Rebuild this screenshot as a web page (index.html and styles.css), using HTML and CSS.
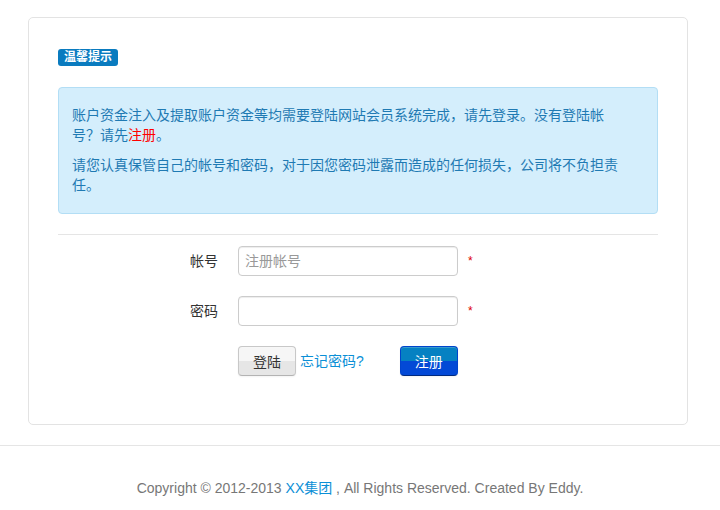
FILE: index.html
```html
<!DOCTYPE html>
<html lang="zh-CN">
<head>
    <meta charset="UTF-8">
    <meta name="viewport" content="width=device-width, initial-scale=1.0">
    <title>会员登陆</title>

    <link rel="stylesheet" href="styles.css">
</head>
<body>

    <div class="panel">
        <span class="badge">温馨提示</span>

        <div class="alert">
            <p>账户资金注入及提取账户资金等均需要登陆网站会员系统完成，请先登录。没有登陆帐号？请先<a href="#" class="red">注册</a>。</p>
            <p>请您认真保管自己的帐号和密码，对于因您密码泄露而造成的任何损失，公司将不负担责任。</p>
        </div>

        <hr class="line">

        <form class="login-form">
            <div class="row">
                <label class="row-label" for="user">帐号</label>
                <input type="text" id="user" class="field" placeholder="注册帐号">
                <span class="star">*</span>
            </div>
            <div class="row">
                <label class="row-label" for="pass">密码</label>
                <input type="password" id="pass" class="field">
                <span class="star">*</span>
            </div>
            <div class="row actions">
                <span class="row-label"></span>
                <button type="button" class="btn">登陆</button>
                <a href="#" class="forget">忘记密码?</a>
                <button type="button" class="btn btn-blue">注册</button>
            </div>
        </form>
    </div>

    <footer class="footer">
        <p>Copyright © 2012-2013 <a href="#">XX集团</a> , All Rights Reserved. Created By Eddy.</p>
    </footer>

</body>
</html>
```

FILE: styles.css
```css
* {
    margin: 0;
    padding: 0;
    box-sizing: border-box;
}

body {
    font-family: "Liberation Sans", "Noto Sans CJK SC", sans-serif;
    font-size: 14px;
    line-height: 20px;
    color: #333;
    background: #fff;
}

a {
    text-decoration: none;
}

.panel {
    width: 660px;
    margin: 17px 0 0 28px;
    padding: 31px 29px 48px;
    border: 1px solid #e3e3e3;
    border-radius: 5px;
}

.badge {
    display: block;
    width: 60px;
    height: 17px;
    line-height: 17px;
    text-align: center;
    font-size: 12px;
    font-weight: bold;
    color: #fff;
    background: #0a7bbf;
    border-radius: 3px;
}

.alert {
    margin-top: 21px;
    padding: 17px 30px 8px 13px;
    background: #d4eefc;
    border: 1px solid #b3def5;
    border-radius: 4px;
    color: #1f7ab3;
}

.alert p {
    margin-bottom: 10px;
}

.alert .red {
    color: #f00;
}

.line {
    margin: 20px 0 10px;
    border: 0;
    border-top: 1px solid #e5e5e5;
    border-bottom: 1px solid #fff;
}

.row {
    display: flex;
    align-items: center;
    height: 30px;
    margin-bottom: 20px;
}

.row:last-child {
    margin-bottom: 0;
}

.row-label {
    width: 160px;
    margin-right: 20px;
    text-align: right;
    color: #333;
}

.field {
    width: 220px;
    height: 30px;
    padding: 4px 6px;
    border: 1px solid #ccc;
    border-radius: 4px;
    font-family: inherit;
    font-size: 14px;
    color: #555;
    box-shadow: inset 0 1px 1px rgba(0, 0, 0, 0.075);
}

.field::placeholder {
    color: #999;
}

.star {
    margin-left: 10px;
    color: #d00;
    font-size: 12px;
}

.btn {
    width: 58px;
    height: 30px;
    border: 1px solid #c8c8c8;
    border-bottom-color: #b3b3b3;
    border-radius: 4px;
    background: linear-gradient(to bottom, #f6f6f6 0%, #f6f6f6 50%, #e6e6e6 50%, #e6e6e6 100%);
    font-family: inherit;
    font-size: 14px;
    color: #333;
    box-shadow: inset 0 1px 0 rgba(255, 255, 255, 0.2), 0 1px 2px rgba(0, 0, 0, 0.05);
    cursor: pointer;
}

.btn-blue {
    margin-left: 36px;
    border-color: #0044cc #0044cc #002a80;
    background: linear-gradient(to bottom, #0581c2 0%, #0581c2 50%, #0349d6 50%, #0349d6 100%);
    color: #fff;
}

.forget {
    margin-left: 4px;
    color: #0b8fd6;
}

.footer {
    margin-top: 20px;
    padding-top: 32px;
    border-top: 1px solid #e5e5e5;
    text-align: center;
    color: #777;
}

.footer a {
    color: #0b8fd6;
}
```
